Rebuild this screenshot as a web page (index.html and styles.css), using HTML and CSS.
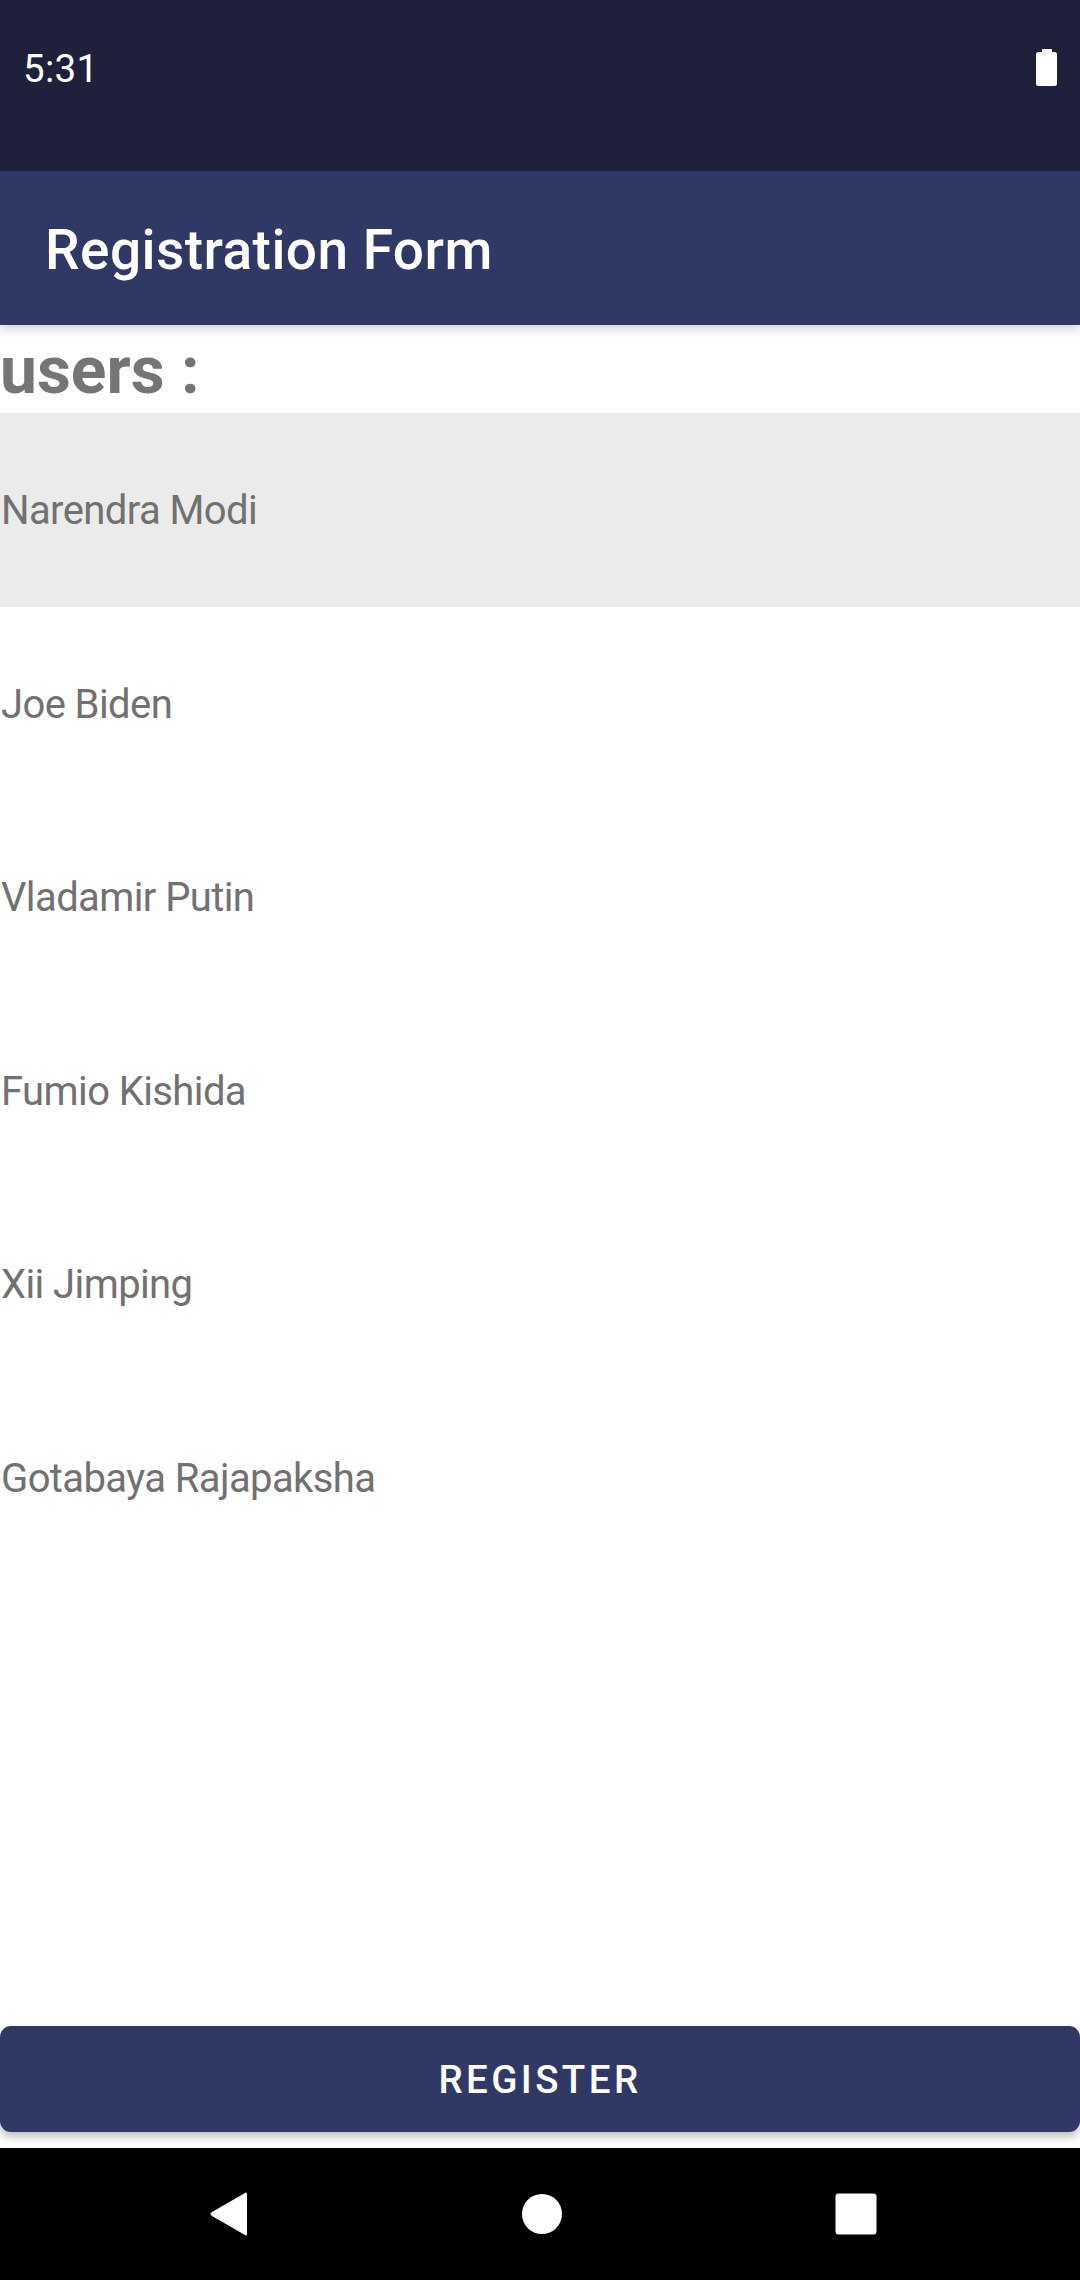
FILE: index.html
```html
<!DOCTYPE html>
<html>
<head>
<meta charset="utf-8">
<link rel="stylesheet" href="styles.css">
</head>
<body>
<div class="screen">
  <div class="status">
    <span class="time">5:31</span>
    <svg class="battery" width="22" height="38" viewBox="0 0 22 38">
      <rect x="6" y="0" width="10" height="5" rx="1" fill="#fff"/>
      <rect x="0" y="3" width="21" height="34" rx="2.5" fill="#fff"/>
    </svg>
  </div>
  <div class="appbar">
    <span class="title">Registration Form</span>
  </div>
  <div class="content">
    <div class="heading">users :</div>
    <ul class="list">
      <li class="row selected">Narendra Modi</li>
      <li class="row">Joe Biden</li>
      <li class="row">Vladamir Putin</li>
      <li class="row">Fumio Kishida</li>
      <li class="row">Xii Jimping</li>
      <li class="row">Gotabaya Rajapaksha</li>
    </ul>
    <div class="spacer"></div>
    <button class="register">REGISTER</button>
  </div>
  <div class="navbar">
    <svg width="40" height="48" viewBox="0 0 40 48">
      <path d="M36 3 Q38 1 38 5 L38 43 Q38 47 36 45 L3 26 Q0 24 3 22 Z" fill="#fff"/>
    </svg>
    <svg width="42" height="42" viewBox="0 0 42 42">
      <circle cx="21" cy="21" r="20" fill="#fff"/>
    </svg>
    <svg width="42" height="42" viewBox="0 0 42 42">
      <rect x="0.5" y="0.5" width="41" height="41" rx="3" fill="#fff"/>
    </svg>
  </div>
</div>
</body>
</html>
```
FILE: styles.css
```css
* { box-sizing: border-box; }
html, body {
  margin: 0;
  padding: 0;
  background: #fff;
}
body {
  font-family: Roboto, "Liberation Sans", sans-serif;
}
.screen {
  width: 1080px;
  height: 2280px;
  display: flex;
  flex-direction: column;
  overflow: hidden;
}
.status {
  height: 171px;
  flex: none;
  background: #1e2139;
  display: flex;
  align-items: flex-start;
  justify-content: space-between;
  padding: 46px 22px 0 23px;
}
.time {
  color: #fff;
  font-size: 38.5px;
  line-height: 45px;
  letter-spacing: 0.3px;
}
.battery {
  margin-top: 3px;
}
.appbar {
  height: 154px;
  flex: none;
  background: #303866;
  display: flex;
  align-items: center;
  padding-left: 45px;
  box-shadow: 0 4px 10px rgba(0,0,0,0.18);
  position: relative;
  z-index: 2;
}
.title {
  color: #fff;
  font-size: 55px;
  font-weight: 500;
  letter-spacing: 0.45px;
  padding-top: 3px;
}
.content {
  flex: 1;
  display: flex;
  flex-direction: column;
}
.heading {
  height: 88px;
  padding-top: 3px;
  font-size: 66px;
  font-weight: 700;
  line-height: 85px;
  color: #757575;
}
.list {
  list-style: none;
  margin: 0;
  padding: 0;
}
.row {
  height: 193.5px;
  display: flex;
  align-items: center;
  font-size: 40px;
  letter-spacing: -0.6px;
  color: #717171;
  padding-left: 1px;
  padding-top: 2px;
}
.row.selected {
  background: #ebebeb;
}
.spacer {
  flex: 1;
}
.register {
  height: 106px;
  margin: 0 0 16px 0;
  border: none;
  border-radius: 11px;
  background: #303866;
  color: #fff;
  font-family: Roboto, "Liberation Sans", sans-serif;
  font-size: 38.5px;
  font-weight: 500;
  letter-spacing: 3.4px;
  box-shadow: 0 5px 8px rgba(0,0,0,0.25);
  padding: 0;
}
.navbar {
  height: 132px;
  flex: none;
  background: #000;
  display: flex;
  align-items: center;
  justify-content: center;
  gap: 272px;
  padding-left: 6px;
}
```
